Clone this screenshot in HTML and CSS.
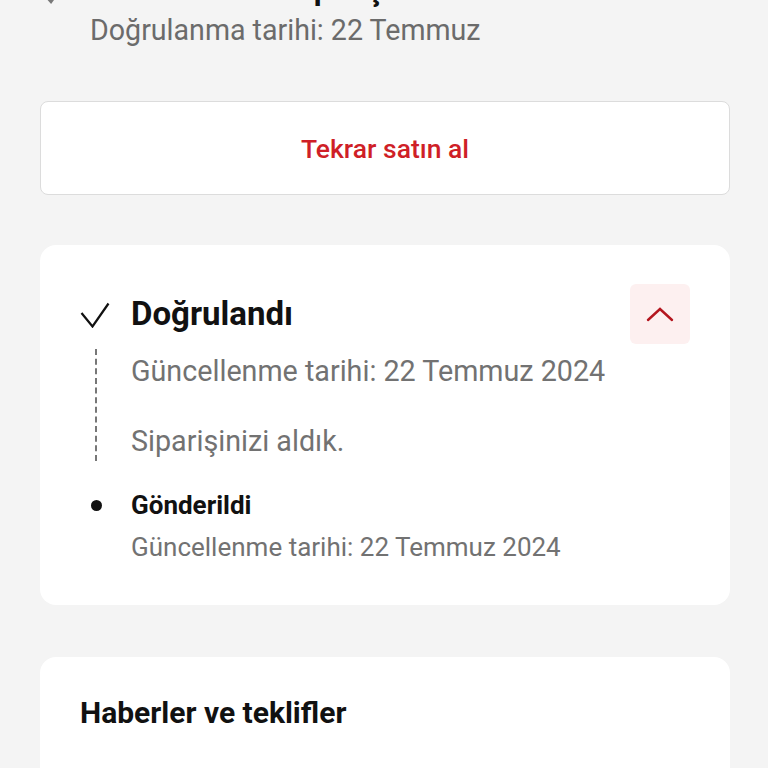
FILE: index.html
```html
<!DOCTYPE html>
<html lang="tr">
<head>
    <meta charset="UTF-8">
    <meta name="viewport" content="width=device-width, initial-scale=1.0">
    <title>Sipariş</title>
    <link rel="stylesheet" href="styles.css">
</head>
<body>
    <div class="page">
        <div class="head">
            <div class="head_icon">
                <svg width="28" height="28" viewBox="0 0 28 28"><path d="M2 14 L11 24 L26 4" fill="none" stroke="#000" stroke-width="2.4"/></svg>
            </div>
            <div class="head_text">
                <h1 class="title">Tamamlanan sipariş</h1>
                <p class="sub">Doğrulanma tarihi: 22 Temmuz</p>
            </div>
        </div>

        <button class="again">Tekrar satın al</button>

        <div class="card status">
            <div class="step done">
                <div class="step_mark">
                    <svg width="30" height="26" viewBox="0 0 30 26"><path d="M1.5 11 L12.5 24.5 L28.5 1.5" fill="none" stroke="#111" stroke-width="2.2" stroke-linejoin="miter"/></svg>
                    <span class="dash"></span>
                </div>
                <div class="step_body">
                    <div class="step_top">
                        <h2 class="step_title">Doğrulandı</h2>
                        <span class="toggle">
                            <svg width="28" height="16" viewBox="0 0 28 16"><path d="M2 14 L14 3 L26 14" fill="none" stroke="#b4161f" stroke-width="2.4" stroke-linecap="round"/></svg>
                        </span>
                    </div>
                    <p class="step_date">Güncellenme tarihi: 22 Temmuz 2024</p>
                    <p class="step_note">Siparişinizi aldık.</p>
                </div>
            </div>
            <div class="step next">
                <div class="step_mark">
                    <span class="dot"></span>
                </div>
                <div class="step_body">
                    <h3 class="step_title small">Gönderildi</h3>
                    <p class="step_date small">Güncellenme tarihi: 22 Temmuz 2024</p>
                </div>
            </div>
        </div>

        <div class="card news">
            <h2 class="news_title">Haberler ve teklifler</h2>
        </div>
    </div>
</body>
</html>
```

FILE: styles.css
```css
*{
  margin: 0;
  padding: 0;
  box-sizing: border-box;
}
body {
  background: #f4f4f4;
  font-family: Roboto, "Noto Sans", sans-serif;
  color: #111;
  height: 768px;
  overflow: hidden;
}
.page {
  padding: 0 38px 0 40px;
}

/* ust baslik, yarisi ekran disinda */
.head {
  display: flex;
  gap: 22px;
  margin-top: -30px;
}
.head_icon {
  width: 28px;
  padding-top: 8px;
  opacity: 0.5;
}
.title {
  font-size: 31px;
  font-weight: 700;
  line-height: 40px;
  height: 40px;
  white-space: nowrap;
  margin-left: 12px;
}
.sub {
  font-size: 28.6px;
  color: #6b6b6b;
  line-height: 40px;
}

.again {
  display: block;
  width: 100%;
  height: 94px;
  margin-top: 51px;
  background: #fff;
  border: 1px solid #dcdcdc;
  border-radius: 8px;
  font-family: Roboto, "Noto Sans", sans-serif;
  font-size: 26.5px;
  font-weight: 500;
  color: #cf1f27;
}

.card {
  background: #fff;
  border-radius: 16px;
}
.status {
  margin-top: 50px;
  padding: 39px 40px 41px 40px;
}
.step {
  display: flex;
}
.step_mark {
  width: 51px;
  flex: none;
  display: flex;
  flex-direction: column;
  align-items: flex-start;
}
.done .step_mark svg {
  margin-top: 18px;
}
.dash {
  display: block;
  width: 0;
  height: 112px;
  margin-top: 21px;
  margin-left: 15px;
  border-left: 2px dashed #777;
}
.step_body {
  flex: 1;
}
.step_top {
  display: flex;
  justify-content: space-between;
  align-items: center;
}
.step_title {
  font-size: 33px;
  font-weight: 700;
  line-height: 60px;
}
.toggle {
  width: 60px;
  height: 60px;
  border-radius: 6px;
  background: #fdf0f0;
  display: flex;
  align-items: center;
  justify-content: center;
}
.step_date {
  font-size: 28.7px;
  color: #727272;
  line-height: 36px;
  margin-top: 9px;
}
.step_note {
  font-size: 28.7px;
  color: #727272;
  line-height: 36px;
  margin-top: 34px;
}

.next {
  margin-top: 26px;
}
.next .step_mark {
  padding-top: 12.5px;
}
.dot {
  display: block;
  width: 11px;
  height: 11px;
  margin-left: 10.5px;
  border-radius: 50%;
  background: #111;
}
.step_title.small {
  font-size: 26px;
  line-height: 36px;
}
.step_date.small {
  font-size: 26px;
  line-height: 34px;
  margin-top: 7px;
}

.news {
  margin-top: 52px;
  padding: 39px 40px;
  height: 200px;
}
.news_title {
  font-size: 30px;
  font-weight: 700;
  line-height: 34px;
}
```
